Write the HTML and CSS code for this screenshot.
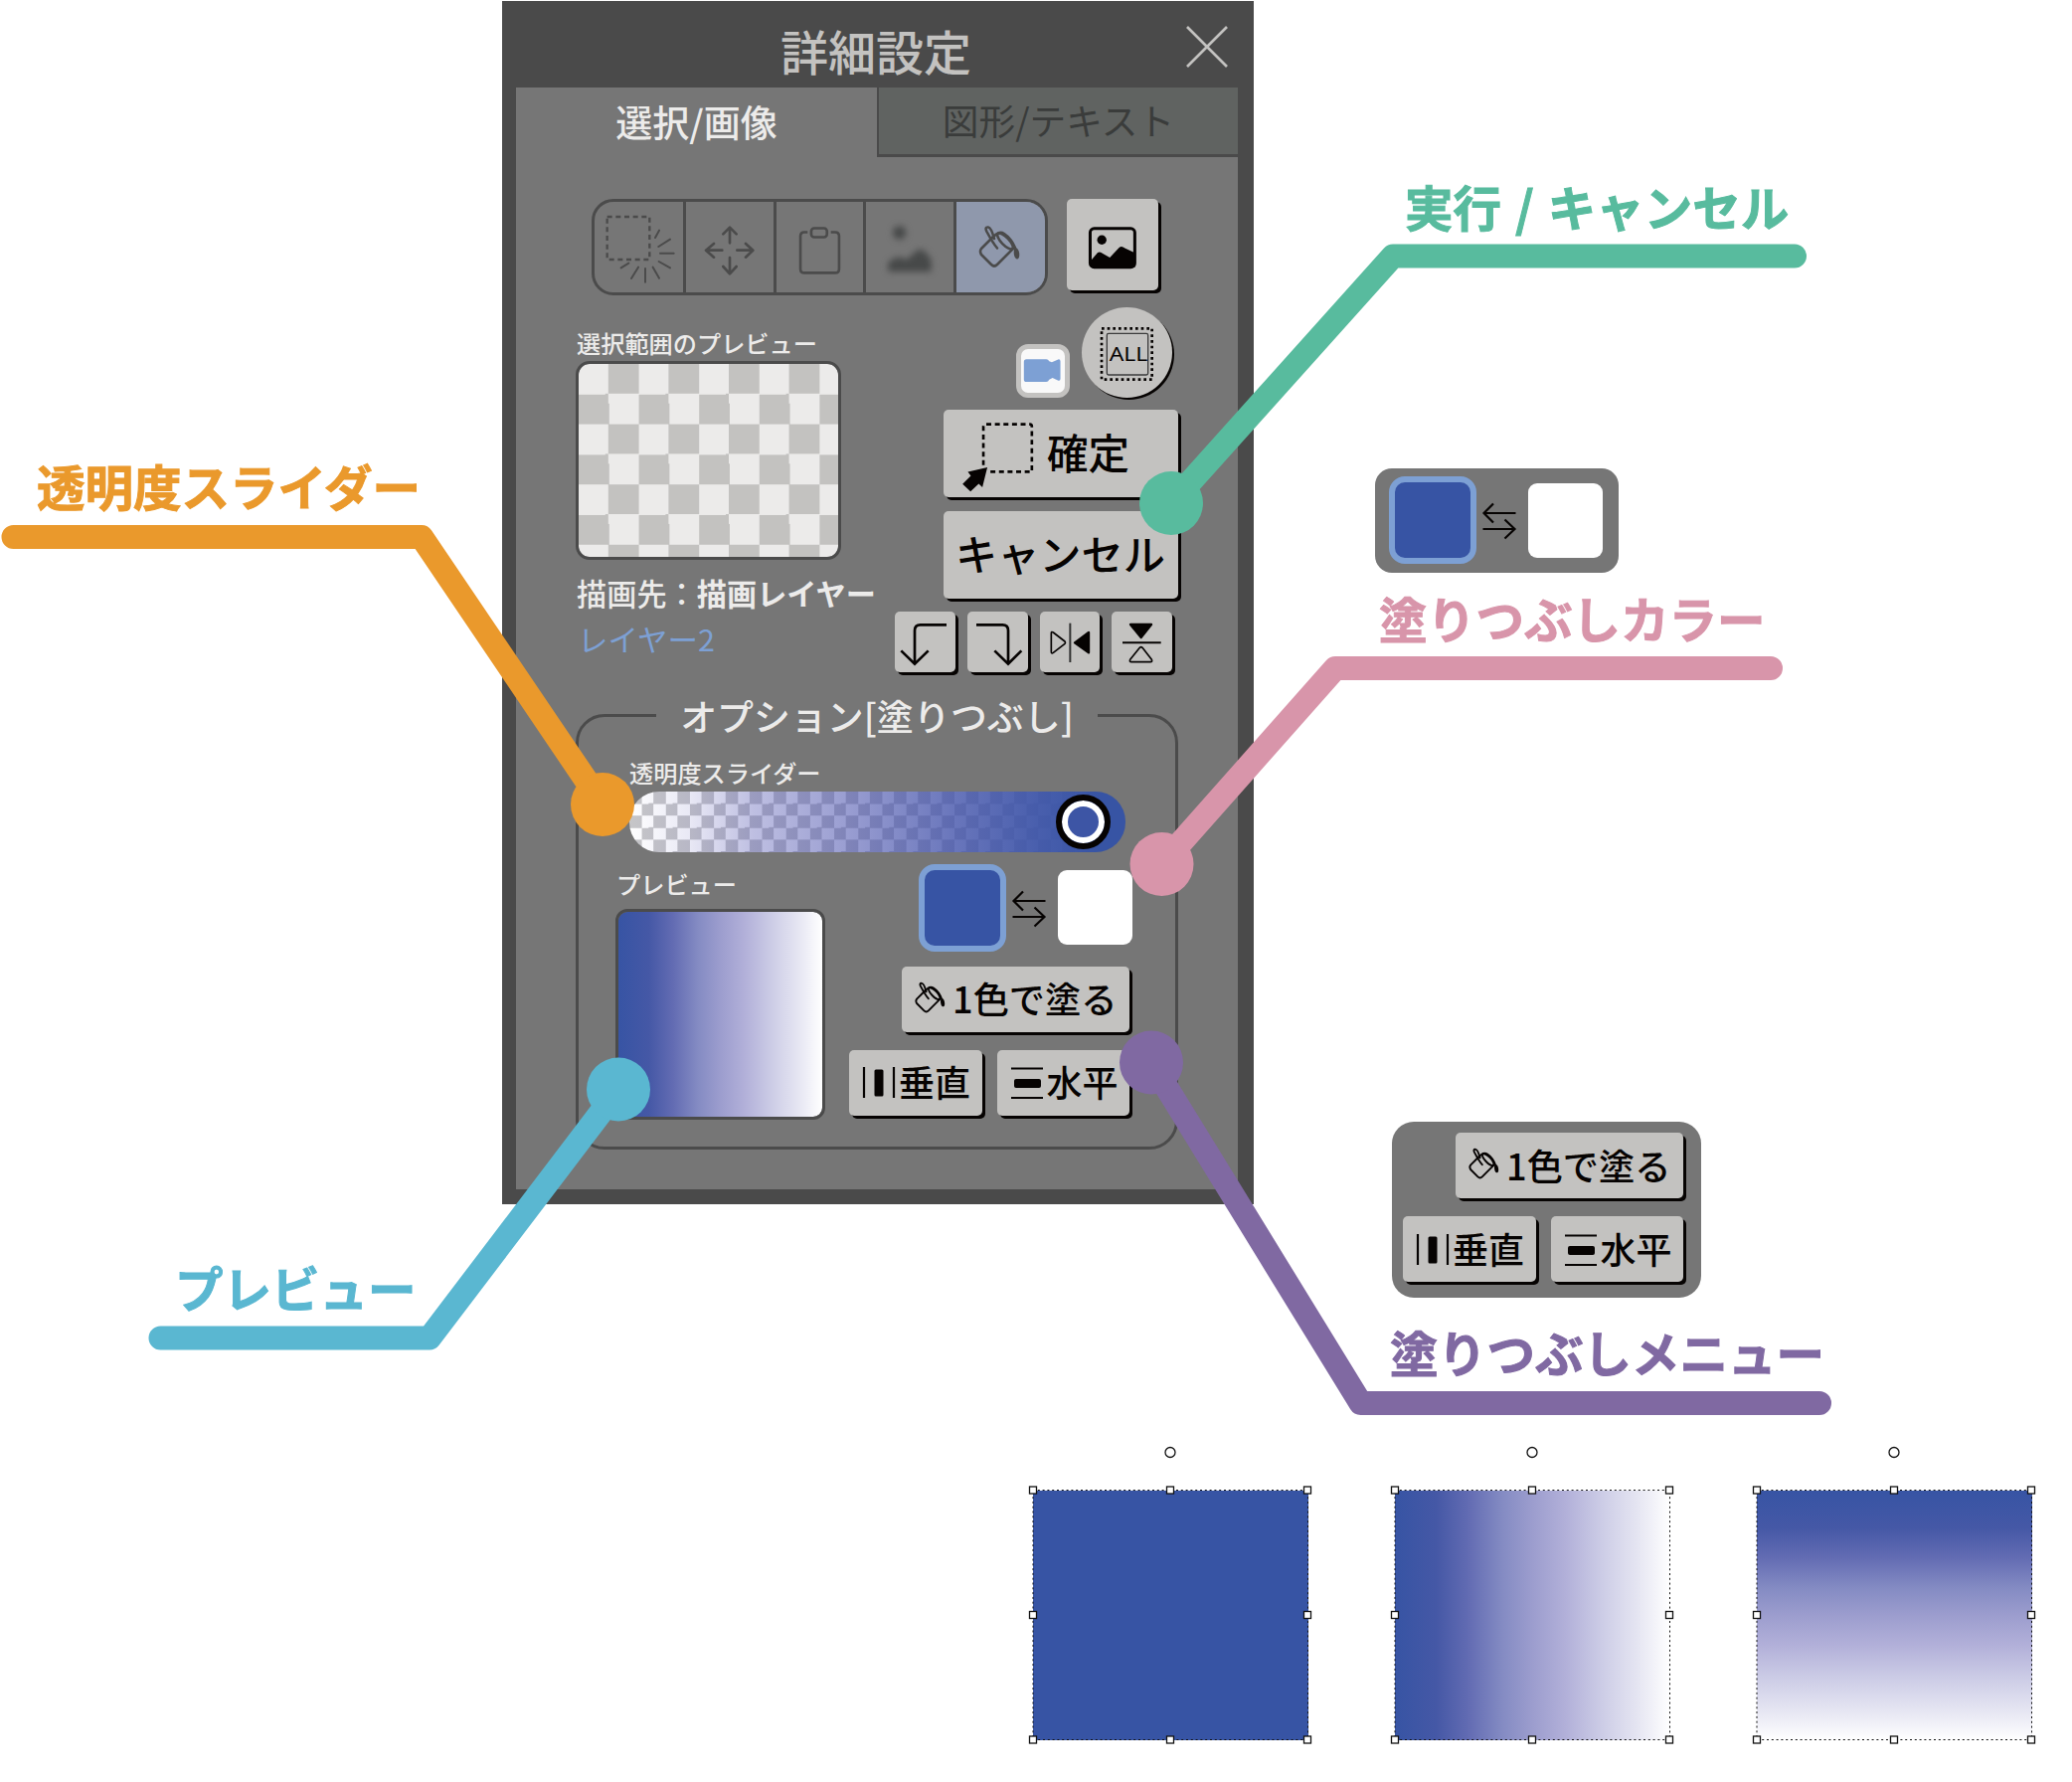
FILE: index.html
```html
<!DOCTYPE html>
<html lang="ja">
<head>
<meta charset="utf-8">
<title>詳細設定</title>
<link rel="stylesheet" href="styles.css">
</head>
<body>
<svg class="defs" aria-hidden="true">
  <symbol id="bucket" viewBox="-2 -2 46 45">
    <g fill="none" stroke="currentColor" stroke-width="2.6" stroke-linecap="round" stroke-linejoin="round">
      <path d="M13 11 L2 22 Q0 24.500 2 28 L12 38 Q15 41 18 38 L34 22"/>
      <path d="M13 11 L17 7.500 Q21 4.500 25 7 Q33 12 37 24"/>
      <ellipse cx="26" cy="14.500" rx="3.800" ry="10.500" transform="rotate(-44 26 14.500)"/>
      <path d="M18 21.500 Q14 17 7.500 5 Q5 0 9 .500 Q12 1 15 12"/>
    </g>
    <ellipse cx="37.500" cy="27" rx="2.700" ry="5.600" fill="currentColor" transform="rotate(-8 37.500 27)"/>
  </symbol>
  <symbol id="swap" viewBox="0 0 36 40">
    <path d="M34.500 12H2.500M12 2.500L2.500 12L12 21.500M1.500 28H33.500M23.500 18.500L33.500 28L23.500 37.500" fill="none" stroke="#060302" stroke-width="2.200"/>
  </symbol>
  <symbol id="bars-v" viewBox="0 0 34 32">
    <path d="M2 0V31M32 0V31" stroke="#060302" stroke-width="2.200"/><rect x="12.500" y="2.500" width="9" height="27" rx="1.500" fill="#060302"/>
  </symbol>
  <symbol id="bars-h" viewBox="0 0 34 32">
    <path d="M1 1.500H33M1 31H33" stroke="#060302" stroke-width="2"/><rect x="4" y="12" width="27" height="9" rx="2" fill="#060302"/>
  </symbol>
</svg>

<main class="canvas">
  <section class="panel">
    <header class="panel-header">
      <h1 class="panel-title">詳細設定</h1>
      <svg class="close" viewBox="0 0 42 42"><path d="M1 1L41 41M41 1L1 41" stroke="#c3c2c0" stroke-width="2.700"/></svg>
    </header>
    <div class="panel-body">
      <nav class="tabs">
        <div class="tab tab-on">選択/画像</div>
        <div class="tab tab-off">図形/テキスト</div>
      </nav>

      <div class="tools">
        <div class="tool-group">
          <div class="tool"><svg viewBox="54 39 267 273" fill="none" stroke="#4b4b4b" stroke-width="7">
            <rect x="92" y="84" width="128" height="129" stroke-dasharray="15 11"/>
            <path d="M237 147L249 125M247 174L282 152M252 194H293M248 219L282 238M230 236L249 269M207 240V281M186 236L165 270M157 224L134 238" stroke-linecap="round" stroke-width="6"/></svg></div>
          <div class="tool"><svg viewBox="330 39 264 273" fill="none" stroke="#4b4b4b" stroke-width="8" stroke-linecap="round" stroke-linejoin="round">
            <path d="M462 163V118M442 136L462 116L482 136M439 185H392M414 165L390 185L414 206M484 185H530M510 165L532 185L510 206M462 207V254M442 234L462 256L482 234"/></svg></div>
          <div class="tool"><svg viewBox="603 39 264 273" fill="none" stroke="#4b4b4b" stroke-width="8">
            <path d="M698 130H688Q676 130 676 142V242Q676 254 688 254H782Q794 254 794 242V142Q794 130 782 130H769"/><rect x="709" y="118" width="48" height="27" rx="9"/></svg></div>
          <div class="tool"><svg viewBox="-27 39 264 273" fill="#474949">
            <g class="soft"><circle cx="74" cy="132" r="20"/><path d="M40 250V222Q70 195 95 214L130 184Q145 176 170 214V250Z"/></g></svg></div>
          <div class="tool tool-on"><svg class="bucket-lg"><use href="#bucket"/></svg></div>
        </div>
        <div class="key image-key"><svg viewBox="577 30 273 273" fill="#060302">
          <rect x="647" y="119" width="134" height="116" rx="12" fill="none" stroke="#060302" stroke-width="9"/><circle cx="682" cy="153" r="14"/><path d="M650 214L669 192Q676 186 685 194L706 206L734 176Q742 170 751 178L781 192V236H650Z"/></svg></div>
      </div>

      <div class="selection">
        <div class="selection-info">
          <div class="caption">選択範囲のプレビュー</div>
          <div class="checker"></div>
          <div class="target">描画先：<b>描画レイヤー</b></div>
          <div class="layer">レイヤー2</div>
        </div>
        <div class="selection-actions">
          <div class="round-row">
            <div class="camera"><svg viewBox="442 153 129 130" fill="#7da0d4"><path d="M458 184H518Q524 184 527 190L535 193L556 184Q561 184 561 190V244Q561 250 555 249L537 241L527 246Q524 253 518 253H458Q450 253 450 245V192Q450 184 458 184Z"/></svg></div>
            <div class="all"><svg viewBox="624 27 273 273"><rect x="684" y="91" width="152" height="154" fill="none" stroke="#060302" stroke-width="8" stroke-dasharray="8 9"/><rect x="700" y="106" width="124" height="125" rx="5" fill="none" stroke="#3c3c3c" stroke-width="4"/><text class="all-text" x="707" y="190" textLength="116" lengthAdjust="spacingAndGlyphs">ALL</text></svg></div>
          </div>
          <div class="key wide-key"><svg class="wide-icon" viewBox="260 370 225 220"><path d="M329 505V388Q329 381 336 381H470Q476 381 476 388V525H350" fill="none" stroke="#060302" stroke-width="8" stroke-dasharray="15 11"/><path d="M341 512L282 525L291 537L266 562L290 585L315 561L326 572Z" fill="#060302"/></svg><span>確定</span></div>
          <div class="key wide-key cancel-key"><span>キャンセル</span></div>
          <div class="turns">
            <div class="key turn"><svg viewBox="60 945 182 182" fill="none" stroke="#060302" stroke-width="8"><path d="M216 985H137Q120 985 120 1002V1102M79 1063L120 1103L161 1063"/></svg></div>
            <div class="key turn"><svg viewBox="279 945 182 182" fill="none" stroke="#060302" stroke-width="8"><path d="M306 985H385Q402 985 402 1002V1102M361 1063L402 1103L442 1063"/></svg></div>
            <div class="key turn"><svg viewBox="497 945 182 182" stroke="#060302" stroke-linejoin="round"><path d="M531 1011Q531 1004 537 1008L572 1035Q575 1039 572 1042L537 1069Q531 1073 531 1066Z" fill="none" stroke-width="5"/><path d="M588 980V1098" stroke="#333" stroke-width="6"/><path d="M644 1008V1069L602 1039Z" fill="#060302" stroke-width="7"/></svg></div>
            <div class="key turn"><svg viewBox="715 945 182 182" stroke="#060302" stroke-linejoin="round"><path d="M772 984H835L804 1023Z" fill="#060302" stroke-width="7"/><path d="M748 1039H864" stroke-width="6"/><path d="M808 1054L836 1090Q839 1097 832 1097H775Q768 1097 771 1090L800 1054Q804 1050 808 1054Z" fill="none" stroke-width="5"/></svg></div>
          </div>
        </div>
      </div>

      <fieldset class="options">
        <legend class="options-title">オプション[塗りつぶし]</legend>
        <div class="caption slider-caption">透明度スライダー</div>
        <div class="slider"><div class="knob"></div></div>
        <div class="fill-area">
          <div class="fill-preview">
            <div class="caption">プレビュー</div>
            <div class="preview-box"></div>
          </div>
          <div class="fill-controls">
            <div class="swatches">
              <div class="swatch swatch-on"></div><svg class="swap"><use href="#swap"/></svg><div class="swatch swatch-white"></div>
            </div>
            <div class="fill-keys">
              <div class="key solid-key"><svg class="bucket-sm"><use href="#bucket"/></svg><span>1色で塗る</span></div>
              <div class="fill-row">
                <div class="key grad-key"><svg class="bars"><use href="#bars-v"/></svg><span>垂直</span></div>
                <div class="key grad-key"><svg class="bars"><use href="#bars-h"/></svg><span>水平</span></div>
              </div>
            </div>
          </div>
        </div>
      </fieldset>
    </div>
  </section>

  <div class="card color-card">
    <div class="swatches">
      <div class="swatch swatch-on"></div><svg class="swap"><use href="#swap"/></svg><div class="swatch swatch-white"></div>
    </div>
  </div>
  <div class="card menu-card">
    <div class="fill-keys">
      <div class="key solid-key"><svg class="bucket-sm"><use href="#bucket"/></svg><span>1色で塗る</span></div>
      <div class="fill-row">
        <div class="key grad-key"><svg class="bars"><use href="#bars-v"/></svg><span>垂直</span></div>
        <div class="key grad-key"><svg class="bars"><use href="#bars-h"/></svg><span>水平</span></div>
      </div>
    </div>
  </div>

  <svg class="leaders" viewBox="0 0 2084 1792" fill="none" stroke-width="24" stroke-linecap="round" stroke-linejoin="round">
    <g stroke="#ea992c"><path d="M13.500 540H424L606 809"/><circle cx="606" cy="809" r="32" fill="#ea992c" stroke="none"/></g>
    <g stroke="#58bb9e"><path d="M1805 257.500H1401L1178 506"/><circle cx="1178" cy="506" r="32" fill="#58bb9e" stroke="none"/></g>
    <g stroke="#d895aa"><path d="M1781 672H1343L1168.500 869"/><circle cx="1168.500" cy="869" r="32" fill="#d895aa" stroke="none"/></g>
    <g stroke="#8069a2"><path d="M1830 1411H1368.500L1158 1068.500"/><circle cx="1158" cy="1068.500" r="32" fill="#8069a2" stroke="none"/></g>
    <g stroke="#5ab7d1"><path d="M161.500 1345.500H432L622 1095.500"/><circle cx="622" cy="1095.500" r="32" fill="#5ab7d1" stroke="none"/></g>
  </svg>

  <div class="label label-slider">透明度スライダー</div>
  <div class="label label-preview">プレビュー</div>
  <div class="label label-run">実行 / キャンセル</div>
  <div class="label label-color">塗りつぶしカラー</div>
  <div class="label label-menu">塗りつぶしメニュー</div>

  <div class="samples">
    <div class="sample"><div class="sample-fill fill-solid"></div>
      <svg class="handles" viewBox="0 0 286 300"><use href="#frame"/></svg></div>
    <div class="sample"><div class="sample-fill fill-across"></div>
      <svg class="handles" viewBox="0 0 286 300"><use href="#frame"/></svg></div>
    <div class="sample"><div class="sample-fill fill-down"></div>
      <svg class="handles" viewBox="0 0 286 300"><use href="#frame"/></svg></div>
  </div>
  <svg class="defs" aria-hidden="true">
    <g id="frame" stroke="#111" stroke-width="1.300">
      <rect x="5" y="43.500" width="276.500" height="251" fill="none" stroke-width="1" stroke-dasharray="2 2.800"/>
      <g fill="#fff">
        <circle cx="143" cy="5.500" r="5"/>
        <rect x="1.500" y="40" width="7" height="7"/><rect x="139.500" y="40" width="7" height="7"/><rect x="277.500" y="40" width="7" height="7"/>
        <rect x="1.500" y="165.500" width="7" height="7"/><rect x="277.500" y="165.500" width="7" height="7"/>
        <rect x="1.500" y="291" width="7" height="7"/><rect x="139.500" y="291" width="7" height="7"/><rect x="277.500" y="291" width="7" height="7"/>
      </g>
    </g>
  </svg>
</main>
</body>
</html>
```
FILE: styles.css
```css
* { box-sizing: border-box; }
body { margin: 0; background: #fff; font-family: "Noto Sans CJK JP", sans-serif; }
svg { display: block; overflow: visible; }
.defs { position: absolute; width: 0; height: 0; overflow: hidden; }
.canvas {
  position: relative; width: 2084px; height: 1792px; overflow: hidden;
  --ramp: #3754a4 0%, #4558a6 15%, #636cb3 27%, #848bc3 39%, #9c9dce 50%, #b2b0d9 62%, #cccce6 75%, #e5e5f2 88%, #fff 100%;
}

/* settings window */
.panel {
  position: absolute; left: 505px; top: 1px; width: 756px; height: 1210px;
  padding: 0 16px 15px 14px; background: #4a4a4a; display: flex; flex-direction: column;
}
.panel-header { height: 87px; flex: none; display: grid; grid-template-columns: 1fr 42px; padding: 25px 10px 0 50px; }
.panel-title { margin: 0; font-size: 48px; font-weight: 500; line-height: 48px; color: #c3c2c0; text-align: center; }
.close { width: 42px; height: 42px; }
.panel-body { flex: 1; background: #767676; color: #ecebea; }
.tabs { display: grid; grid-template-columns: 363px 363px; height: 70px; }
.tab { text-align: center; line-height: 68px; font-weight: 500; }
.tab-on { font-size: 37px; }
.tab-off { font-size: 36.700px; font-weight: 400; background: #606361; color: #3a3c3b; border-left: 2px solid #4a4a4a; border-bottom: 3px solid #4a4a4a; line-height: 65px; }

.tools { display: flex; gap: 18px; padding: 42px 0 0 76px; height: 151px; }
.tool-group { width: 459px; height: 97px; border: 3px solid #4b4b4b; border-radius: 22px; overflow: hidden; display: grid; grid-template-columns: 92px 91px 90px 91px 1fr; }
.tool { border-right: 3px solid #4b4b4b; }
.tool > svg { width: 100%; height: 91px; }
.tool-on { background: #8f98ac; border: 0; padding-right: 2px; display: grid; place-items: center; color: #4b4b4b; }
.tool .bucket-lg { width: 46px; height: 45px; }
.soft { filter: blur(10px); }
.key { background: #c3c2c0; color: #060302; border-radius: 5px; box-shadow: 3px 3px 0 #060302; }
.image-key { width: 91.500px; height: 91.500px; margin-left: 1px; }

.selection { display: flex; justify-content: space-between; padding: 0 60px 0 61px; height: 391px; }
.selection-info { padding-top: 22px; width: 321px; white-space: nowrap; }
.caption { font-size: 24.200px; line-height: 28px; font-weight: 500; }
.checker {
  width: 267px; height: 200px; margin: 4px 0 0 -1px; border: 3px solid #4b4b4b; border-radius: 14px;
  background: conic-gradient(#c3c2c0 25%, #ecebea 0 50%, #c3c2c0 0 75%, #ecebea 0) 0 0 / 60.600px 60.600px padding-box;
}
.target { font-size: 30.200px; line-height: 36px; margin-top: 15px; font-weight: 500; }
.layer { font-size: 30.500px; line-height: 36px; margin-top: 10px; padding-left: 1px; color: #7da0d4; }
.selection-actions { display: flex; flex-direction: column; align-items: flex-end; }
.round-row { display: flex; align-items: flex-end; gap: 12px; height: 91px; margin: 0 6px 12px 0; }
.camera { width: 54px; height: 54px; border: 5.500px solid #c3c2c0; border-radius: 12px; background: #f9f9f9; }
.camera svg { width: 43px; height: 43px; }
.all { width: 91px; height: 91px; border-radius: 50%; background: #c3c2c0; box-shadow: 2px 2px 0 #060302; }
.all-text { font-family: "Noto Sans", sans-serif; font-size: 62px; font-weight: 400; fill: #060302; }
.wide-key { width: 236px; height: 88px; margin-bottom: 14px; display: flex; align-items: center; font-size: 41.500px; padding-left: 17px; font-weight: 500; line-height: 76px; }
.wide-key span { margin-top: -5px; }
.wide-icon { width: 75px; height: 73px; margin: 6px 12px 0 0; }
.cancel-key { font-size: 42.200px; margin-bottom: 13px; padding-left: 12px; }
.turns { display: flex; gap: 12px; margin-right: 6px; }
.turn { width: 60.700px; height: 60.700px; }

.options { width: 606px; height: 457px; margin: -1px 0 0 60px; padding: 0; border: 3px solid #4b4b4b; border-radius: 29px; min-width: 0; }
.options-title { width: 444px; height: 40px; margin: 0 auto; padding: 0; text-align: center; font-size: 36.900px; line-height: 40px; font-weight: 500; white-space: nowrap; }
.slider-caption { padding: 24px 0 0 51px; }
.slider {
  width: 499px; height: 60.500px; margin: 5px 0 0 51px; border-radius: 30px; display: flex; align-items: center; justify-content: flex-end; padding-right: 15px;
  background:
    linear-gradient(90deg, rgba(110,105,190,0) 0%, rgba(100,98,185,.14) 12%, rgba(84,86,178,.38) 25%, rgba(70,78,172,.56) 45%, rgba(66,82,170,.79) 65%, rgba(62,85,168,.94) 82%, #3754a4 95%),
    conic-gradient(#fff 25%, #c6c6c8 0 50%, #fff 0 75%, #c6c6c8 0) 0 0 / 24.200px 24.200px;
}
.knob { width: 55px; height: 55px; border-radius: 50%; border: 6px solid #060302; box-shadow: inset 0 0 0 6px #fff; background: #3d55a5; }
.fill-area { display: flex; justify-content: space-between; padding: 12px 43px 0 37px; }
.fill-preview { padding-top: 6px; width: 212px; }
.fill-preview .caption { padding-left: 1px; }
.preview-box { width: 211px; height: 212px; margin-top: 11px; border: 3px solid #4b4b4b; border-radius: 12px; background: linear-gradient(90deg, var(--ramp)) padding-box; }
.fill-controls { display: flex; flex-direction: column; align-items: flex-end; gap: 15px; }
.swatches { display: flex; align-items: center; }
.swatch { border-radius: 9px; width: 75px; height: 75px; }
.swatch-on { width: 88px; height: 88px; border: 6.500px solid #7da0d4; border-radius: 16px; background: #3754a4; }
.swatch-white { background: #fff; }
.swap { width: 36px; height: 40px; margin: 2px 11px 0 5px; }
.fill-keys { display: flex; flex-direction: column; align-items: flex-end; gap: 18px; margin-right: 3px; }
.fill-row { display: flex; gap: 15px; }
.fill-keys .key { height: 66px; display: flex; align-items: center; font-size: 36px; font-weight: 500; line-height: 56px; white-space: nowrap; }
.fill-keys .key span { margin-top: -3px; }
.fill-keys .solid-key { width: 229px; padding-left: 12px; font-size: 36.200px; }
.bucket-sm { width: 34px; height: 33px; margin: 0 5px 3px 0; }
.fill-keys .grad-key { width: 133.500px; padding-left: 13px; }
.bars { width: 34px; height: 32px; margin: 1px 3px 0 0; }

/* cut-out cards */
.card { position: absolute; background: #767676; }
.color-card { left: 1383px; top: 471px; width: 245px; height: 105px; border-radius: 17px; padding: 8px 0 0 14px; }
.menu-card { left: 1400px; top: 1128px; width: 311px; height: 177px; border-radius: 22px; padding: 11px 15px 0 0; }

/* callouts */
.leaders { position: absolute; left: 0; top: 0; width: 2084px; height: 1792px; }
.label { position: absolute; font-size: 48.500px; line-height: 56px; font-weight: 700; white-space: nowrap; -webkit-text-stroke: 1px currentColor; }
.label-slider { left: 37px; top: 460px; color: #ea992c; }
.label-preview { left: 176px; top: 1266px; color: #5ab7d1; }
.label-run { left: 1413px; top: 179px; color: #58bb9e; word-spacing: 3px; }
.label-color { left: 1387px; top: 593px; color: #d895aa; }
.label-menu { left: 1398px; top: 1331px; color: #8069a2; }

/* filled samples with their transform handles */
.samples { position: absolute; left: 1034px; top: 1455px; display: flex; gap: 78.200px; }
.sample { position: relative; width: 286px; height: 300px; padding: 43.500px 4.500px 5.500px 5px; }
.sample-fill { width: 276.500px; height: 251px; }
.fill-solid { background: #3754a4; }
.fill-across { background: linear-gradient(90deg, var(--ramp)); }
.fill-down { background: linear-gradient(180deg, var(--ramp)); }
.handles { position: absolute; left: 0; top: 0; width: 286px; height: 300px; }
```
